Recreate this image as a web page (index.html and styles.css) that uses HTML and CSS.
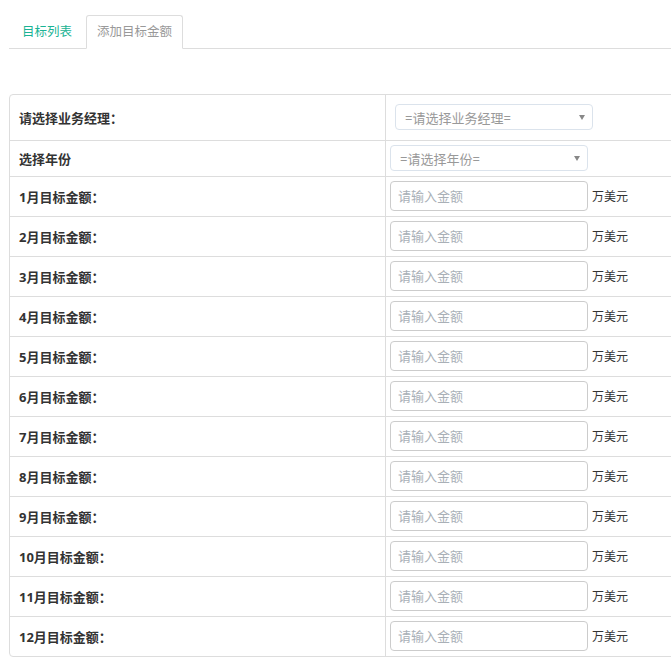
FILE: index.html
```html
<!DOCTYPE html>
<html lang="zh">
<head>
<meta charset="utf-8">
<link rel="stylesheet" href="styles.css">
</head>
<body>
<div class="page">
  <ul class="tabs">
    <li class="tab">目标列表</li>
    <li class="tab active">添加目标金额</li>
  </ul>
  <table class="form">
    <tr class="r-first">
      <td class="lbl">请选择业务经理：</td>
      <td class="val"><div class="sel"><span>=请选择业务经理=</span><i></i></div></td>
    </tr>
    <tr class="r-second">
      <td class="lbl">选择年份</td>
      <td class="val"><div class="sel"><span>=请选择年份=</span><i></i></div></td>
    </tr>
    <tr><td class="lbl">1月目标金额：</td><td class="val"><input class="amt" placeholder="请输入金额"><span class="unit">万美元</span></td></tr>
    <tr><td class="lbl">2月目标金额：</td><td class="val"><input class="amt" placeholder="请输入金额"><span class="unit">万美元</span></td></tr>
    <tr><td class="lbl">3月目标金额：</td><td class="val"><input class="amt" placeholder="请输入金额"><span class="unit">万美元</span></td></tr>
    <tr><td class="lbl">4月目标金额：</td><td class="val"><input class="amt" placeholder="请输入金额"><span class="unit">万美元</span></td></tr>
    <tr><td class="lbl">5月目标金额：</td><td class="val"><input class="amt" placeholder="请输入金额"><span class="unit">万美元</span></td></tr>
    <tr><td class="lbl">6月目标金额：</td><td class="val"><input class="amt" placeholder="请输入金额"><span class="unit">万美元</span></td></tr>
    <tr><td class="lbl">7月目标金额：</td><td class="val"><input class="amt" placeholder="请输入金额"><span class="unit">万美元</span></td></tr>
    <tr><td class="lbl">8月目标金额：</td><td class="val"><input class="amt" placeholder="请输入金额"><span class="unit">万美元</span></td></tr>
    <tr><td class="lbl">9月目标金额：</td><td class="val"><input class="amt" placeholder="请输入金额"><span class="unit">万美元</span></td></tr>
    <tr><td class="lbl">10月目标金额：</td><td class="val"><input class="amt" placeholder="请输入金额"><span class="unit">万美元</span></td></tr>
    <tr><td class="lbl">11月目标金额：</td><td class="val"><input class="amt" placeholder="请输入金额"><span class="unit">万美元</span></td></tr>
    <tr><td class="lbl">12月目标金额：</td><td class="val"><input class="amt" placeholder="请输入金额"><span class="unit">万美元</span></td></tr>
  </table>
</div>
</body>
</html>
```

FILE: styles.css
```css
html, body {
  margin: 0;
  padding: 0;
  background: #fff;
  overflow: hidden;
}
body {
  font-family: "Open Sans", "Noto Sans CJK SC", sans-serif;
  font-size: 13px;
  color: #333;
}
.page {
  width: 671px;
  height: 663px;
  overflow: hidden;
  padding-left: 9px;
  box-sizing: border-box;
}
.tabs {
  list-style: none;
  margin: 0;
  padding: 15px 0 0 0;
  display: flex;
  border-bottom: 1px solid #dddddd;
  width: 700px;
}
.tab {
  height: 32px;
  line-height: 32px;
  padding: 0 12px;
  margin-right: 1px;
  margin-bottom: -1px;
  color: #1ab394;
  border: 1px solid transparent;
  border-bottom: none;
  font-size: 12.5px;
}
.tab.active {
  color: #999;
  border: 1px solid #dddddd;
  border-bottom: 1px solid #fff;
  border-radius: 3px 3px 0 0;
  padding: 0 10px;
  height: 32px;
}
.form {
  margin-top: 45px;
  width: 700px;
  border-collapse: separate;
  border-spacing: 0;
  border: 1px solid #dddddd;
  border-radius: 4px;
}
.form td {
  border-top: 1px solid #dddddd;
  padding: 0;
  vertical-align: middle;
}
.form tr:first-child td {
  border-top: none;
}
.lbl {
  width: 366px;
  padding-left: 9px !important;
  font-weight: bold;
  color: #333;
  border-right: 1px solid #dddddd;
  height: 39px;
}
.r-first .lbl { height: 45px; }
.r-second .lbl { height: 35px; }
.val {
  padding: 4px 0 5px 4px !important;
  white-space: nowrap;
  font-size: 0;
}
.r-first .val {
  padding: 9px 0 10px 9px !important;
}
.sel {
  display: inline-flex;
  align-items: center;
  justify-content: space-between;
  box-sizing: border-box;
  width: 198px;
  height: 26px;
  border: 1px solid #dbe3ec;
  border-radius: 4px;
  padding: 0 7px 0 9px;
  font-size: 13px;
  color: #999;
  vertical-align: middle;
}
.sel i {
  display: block;
  width: 0;
  height: 0;
  border-left: 3px solid transparent;
  border-right: 3px solid transparent;
  border-top: 5px solid #888;
  margin-top: 1px;
}
.amt {
  box-sizing: border-box;
  width: 198px;
  height: 30px;
  border: 1px solid #cccccc;
  border-radius: 4px;
  padding: 0 7px;
  font-family: "Open Sans", "Noto Sans CJK SC", sans-serif;
  font-size: 13px;
  color: #333;
  vertical-align: middle;
  outline: none;
}
.amt::placeholder {
  color: #a9b0b7;
}
.unit {
  font-size: 12px;
  color: #333;
  margin-left: 4px;
  vertical-align: middle;
}
```
